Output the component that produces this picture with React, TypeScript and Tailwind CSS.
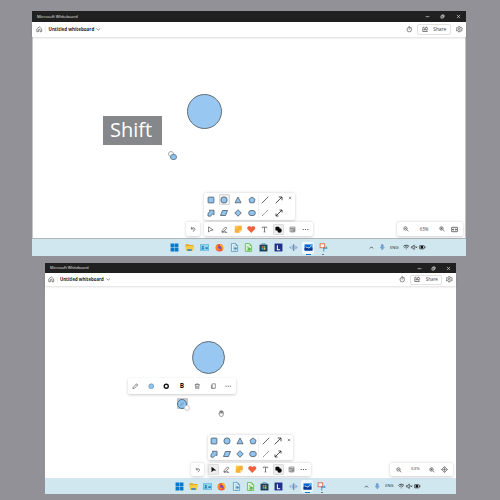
import React from "react";

type IconProps = { name: string; className?: string };

const line = { fill: "none", stroke: "currentColor", strokeWidth: 1.5 };
const shape = { fill: "#8fc5f2", stroke: "#56626e", strokeWidth: 1.7 };

const glyphs: Record<string, React.ReactNode> = {
  home: <path {...line} d="M2 7.5 8 2l6 5.5V14h-4v-4a2 2 0 0 0-4 0v4H2z" />,
  chevronDown: <path {...line} strokeWidth={2} d="m1 5 7 6 7-6" />,
  chevronUp: <path {...line} strokeWidth={2.2} d="m3 11 5-5 5 5" />,
  timer: <path {...line} d="M6 1.5h4M8 5.5V9M8 3.5a5.5 5.5 0 1 0 0 11 5.5 5.5 0 0 0 0-11M12 3l2 2" />,
  share: <path {...line} strokeWidth={1.7} d="M6 3H3a1 1 0 0 0-1 1v9.5h11V11M5 10c0-3 2-5 5-5V2l5 4.5-5 4V8C8 8 6.5 8.5 5 10z" />,
  gear: (
    <g {...line}>
      <path strokeWidth="1.7" d="m6.500 1.500h3l.7 2 2 1 2-.4 1 2.400-1.200 1.500 1.200 1.600-1 2.400-2-.4-2 1-.7 2h-3l-.7-2-2-1-2 .4-1-2.400L2 8 .800 6.500l1-2.400 2 .4 2-1z" />
      <circle cx="8" cy="8" r="2.3" />
    </g>
  ),
  minimize: <path {...line} strokeWidth={2} d="M2 8.5h12" />,
  restore: <path {...line} strokeWidth={2.2} d="M3 6h7v7H3zM6 5.500V3h7v7h-2.500" />,
  close: <path {...line} strokeWidth={2} d="m3 3 10 10M13 3 3 13" />,
  undo: <path {...line} strokeWidth={1.8} d="M3.5 2.5v5h5M4 7c2-2.500 5-3.500 7-1.500 3 3 0 6-4 8" />,
  pointer: <path {...line} strokeWidth={1.6} d="M3.5 2v12l3.500-3.500L14 9z" />,
  pointerFill: <path fill="#0c0c0c" d="M3.5 1.5v13l4-4 7-.5z" />,
  pen: <path {...line} strokeWidth={1.7} d="m3 10 7.500-8 3 3L6 12.500l-4 1zM2 14.500c4 0 7-1 9-2M9 14.500h5" />,
  pencil: <path {...line} strokeWidth={1.6} d="m2 14 1-4 8.500-8 2.500 2.500L6 13zM10 3.500l2.500 2.500" />,
  note: (
    <g>
      <path fill="#fbc641" d="M3 1.500h10A1.500 1.500 0 0 1 14.500 3v7L10 14.500H3A1.500 1.500 0 0 1 1.500 13V3A1.500 1.500 0 0 1 3 1.500z" />
      <path fill="#fa8c24" d="M1.500 14.500 1.500 7c5 1 7-2 7-5.500h6V10L10 14.500z" opacity=".38" />
      <path fill="#ffe8a0" d="M10 14.500V10h4.500z" />
    </g>
  ),
  heart: <path fill="#f2603d" stroke="#d64a2e" strokeWidth=".6" d="M8 14.500 1.500 8C-1 4 4 .5 8 4c4-3.500 9 0 6.500 4z" />,
  letter: <path {...line} strokeWidth={1.7} d="M3 5V2.500h10V5M8 2.500v11M6 13.500h4" />,
  shapes: (
    <g fill="#060606">
      <rect x="1" y="1.500" width="9" height="9" rx="2" />
      <circle cx="10.300" cy="10.300" r="5" />
    </g>
  ),
  template: <path {...line} d="M3.500 2.500h9a1 1 0 0 1 1 1v9a1 1 0 0 1-1 1h-9a1 1 0 0 1-1-1v-9a1 1 0 0 1 1-1zM3 6h10M6.500 6v7.500M9 8.500h3v3H9z" />,
  more: <path fill="currentColor" d="M1.5 7H4v2H1.500zM6.700 7h2.500v2H6.700zM12 7h2.500v2H12z" />,
  square: <rect {...shape} x="2.2" y="2.2" width="11.6" height="11.6" rx="1" />,
  circle: <circle {...shape} cx="8" cy="8" r="6.2" />,
  triangle: <path {...shape} d="M8 2 14 13.500H2z" />,
  pentagon: <path {...shape} d="m8 2 6 4.500-2 7H4l-2-7z" />,
  arrowShape: <path {...shape} d="M4.500 2.500H14V11l-2.500-1L6.500 14.500 2 14V8.500L6 5z" />,
  parallelogram: <path {...shape} d="M5 3h10l-4 10H1z" />,
  diamond: <path {...shape} d="m8 1.500 6.500 6.500L8 14.500 1.500 8z" />,
  ellipse: <rect {...shape} x="1.500" y="3" width="13" height="10" rx="4.500" />,
  diagonal: <path {...line} stroke="#363636" d="M1.500 14.500 14.500 1.500" />,
  dashed: <path {...line} stroke="#444" strokeDasharray="2.400 1" d="M2.500 13.500 13.500 2.500" />,
  arrow: <path {...line} stroke="#333" strokeWidth={1.700} d="M1.500 14.500 14 2M7.500 2H14v6.500" />,
  doubleArrow: <path {...line} stroke="#333" strokeWidth={1.700} d="M2 14 14 2M9 2h5v5M2 9v5h5" />,
  zoomOut: <path {...line} strokeWidth={1.7} d="M6.5 2a4.500 4.500 0 1 0 0 9 4.500 4.500 0 0 0 0-9M4 6.500h5M10 10l4.500 4" />,
  zoomIn: <path {...line} strokeWidth={1.7} d="M6.5 2a4.500 4.500 0 1 0 0 9 4.500 4.500 0 0 0 0-9M4 6.500h5M6.500 4v5M10 10l4.500 4" />,
  fit: <path {...line} strokeWidth={1.7} d="M1.5 3h13v10h-13zM3.500 8H7M9 8h3.500M5.500 6l-2 2 2 2M10.500 6l2 2-2 2" />,
  move: <path {...line} strokeWidth={1.4} d="M8 5.5v5M5.500 8h5M5.500 4 8 1l2.500 3zM5.500 12 8 15l2.500-3zM4 5.500 1 8l3 2.500zM12 5.500 15 8l-3 2.500z" />,
  fillDot: <circle cx="8" cy="8" r="6" fill="#8fc4ee" stroke="#598caf" strokeWidth="1.6" />,
  ring: <circle cx="8" cy="8" r="5" fill="none" stroke="#111" strokeWidth="3.3" />,
  trash: <path {...line} d="M2 4h12M6 4V2h4v2M3.500 4l1 10.500h7l1-10.500M6.500 7v5M9.500 7v5" />,
  copy: <path {...line} d="M5.500 2H13v11H5.500zM3.500 4.500v8c0 1.500 1 2.500 2.500 2.500h4" />,
  hand: <path {...line} fill="#fff" strokeWidth={1.3} d="M3 10 2 7.500c0-1 1.500-1 2 0V4c0-1.500 2-1.500 2 0V2.500c0-1.500 2-1.500 2 0V3c0-1.500 2-1.300 2 0v1c0-1 2-1 2 0v6c0 3-2 5-4 5-3 0-4-2-5-5zM6 4v4M8 3v5M10 4v4" />,
  mic: (
    <g>
      <rect x="5.500" y="1" width="5" height="9" rx="2.500" fill="#75a9dc" stroke="#3c75b5" />
      <path {...line} stroke="#3c75b5" d="M3.500 7.500c0 6 9 6 9 0M8 12v3" />
    </g>
  ),
  wifi: <path {...line} strokeWidth={2} d="M1 6c4-4 10-4 14 0M3.500 9c3-2.500 6-2.500 9 0M8 11v2" />,
  mute: <path {...line} strokeWidth={1.6} d="M1.5 6H4l4-3.500v11L4 10H1.500zM11 6l4 4M15 6l-4 4" />,
  battery: (
    <g>
      <rect x="1" y="4" width="12" height="8" rx="1.5" {...line} strokeWidth="1.6" />
      <path fill="#111" d="M4 5h6v6H4zM14 6h1.500v4H14z" />
    </g>
  ),
  start: <path fill="#0879c8" d="M1 1h6.600v6.600H1zM8.400 1H15v6.600H8.400zM1 8.400h6.600V15H1zM8.400 8.400H15V15H8.400z" />,
  folder: (
    <g>
      <path fill="#e3a11c" d="M1 2h5.500L8 3.500h7v5H1z" />
      <path fill="#f9cc48" d="M1 5h14v9H1z" />
      <path fill="#3183cb" d="M4 11h8v3H4z" />
    </g>
  ),
  card: (
    <g>
      <path fill="#4ba6d4" d="M0 2.500h16v11H0z" />
      <path fill="#8ad8f2" d="M1 3.500h14v9H1z" />
      <circle cx="5" cy="6.500" r="1.800" fill="#3470a0" />
      <path fill="#2d83b7" d="M2.500 11.500c0-4 5-4 5 0zM9.500 7.500H14v3H9.500z" />
    </g>
  ),
  firefox: (
    <g>
      <circle cx="8" cy="8.500" r="6.800" fill="#fa503a" />
      <path fill="#ffb52b" d="M9 1c6 3 7 8 4 12 0-4-1-6-4-8z" />
      <circle cx="8" cy="8.500" r="3.300" fill="#754bb5" />
      <path fill="#ff8a29" d="M1 7 3 3l3 3-2 3c2 2 5 1 6 1-2 5-9 3-9-3z" />
    </g>
  ),
  writer: (
    <g>
      <path fill="#f2faff" stroke="#5799be" strokeWidth="1.500" d="M2.500 1H10l3.500 4v10h-11z" />
      <path stroke="#5393b9" d="M5 5h3M5 7.500h6M5 10h6M5 12.500h6" />
      <path fill="#3987b0" d="M8 8h4v3.500H8zM10 1v4h3.500z" />
    </g>
  ),
  calc: (
    <g>
      <path fill="#e6f7de" stroke="#63b74e" strokeWidth="1.500" d="M2.500 1H10l3.500 4v10h-11z" />
      <path stroke="#59ac44" d="M5 6h3M5 8.500h6M5 11h6M5 13h6M8 8v5" />
      <path fill="#59b844" d="M8 9h4v4H8zM10 1v4h3.500z" />
    </g>
  ),
  store: (
    <g>
      <path fill="#153d5a" d="M1 3h14v12H1z" />
      <path fill="none" stroke="#387497" strokeWidth="1.300" d="M5 4V1.500h6V4" />
      <path fill="#e06b46" d="M4.500 5.500h3.200v3H4.500z" />
      <path fill="#82bf54" d="M8.300 5.500h3.200v3H8.300z" />
      <path fill="#39a8df" d="M4.500 9h3.200v3H4.500z" />
      <path fill="#e8c64c" d="M8.300 9h3.200v3H8.300z" />
    </g>
  ),
  lapp: (
    <g>
      <path fill="#20318b" d="M1 1h14v14H1z" />
      <path fill="none" stroke="#fff" strokeWidth="1.800" d="M6 4v8h5" />
    </g>
  ),
  wave: (
    <g>
      <path fill="#8fb4d8" d="m0 8 4-3v6zM16 8l-4-3v6z" />
      <path fill="#8abce6" d="M5 4.500h2.200v7H5z" />
      <path fill="#5376b0" d="M7.500 2h1.800v12H7.500z" />
      <path fill="#d4949f" d="M9.800 5h2v6h-2z" />
    </g>
  ),
  whiteboard: (
    <g>
      <path fill="#0862cb" d="M1 2.500h14v11H1z" />
      <path fill="#0a348f" d="M1 9c5-5 8 4 14-1v5.500H1z" />
      <path fill="none" stroke="#fff" strokeWidth="1.400" d="m3 7 3 1 3 1 5-5" />
      <path fill="#42bafa" d="m11 5 3-4 2 1-4 5z" />
    </g>
  ),
  snip: (
    <g>
      <path fill="#f7f4f2" stroke="#e07a5d" strokeWidth="1.800" d="M2 1.500h8v7H2z" />
      <path fill="none" stroke="#4a95bc" strokeWidth="1.800" d="M8.500 7v8M7 9.500h8M12 6.500l2.500 3" />
    </g>
  ),
};

function Icon({ name, className = "size-[7px]" }: IconProps) {
  return (
    <svg viewBox="0 0 16 16" className={`shrink-0 ${className}`} aria-hidden="true">
      {glyphs[name]}
    </svg>
  );
}

function TitleBar({ className, controls }: { className: string; controls: string }) {
  return (
    <div className={`flex items-center justify-between bg-[#202020] pl-[5px] text-[#e8e8e8] ${className}`}>
      <span className="whitespace-nowrap">Microsoft Whiteboard</span>
      <div className={`flex items-center justify-between ${controls}`}>
        <Icon name="minimize" className="size-[5px]" />
        <Icon name="restore" className="size-[5px]" />
        <Icon name="close" className="size-[5px]" />
      </div>
    </div>
  );
}

function Header({ className, title, share }: { className: string; title: string; share: string }) {
  return (
    <div className={`relative z-10 flex items-center bg-white text-[#444] shadow-[0_1px_2px_#0002] ${className}`}>
      <Icon name="home" className="size-[6.5px]" />
      <div className="ml-[2.5px] h-[6px] w-px bg-[#eee]" />
      <span className={`whitespace-nowrap font-bold text-[#252525] ${title}`}>Untitled whiteboard</span>
      <Icon name="chevronDown" className="ml-[2px] size-[4.5px]" />
      <Icon name="timer" className="ml-auto size-[6.5px]" />
      <div className={`flex items-center justify-center rounded-[2px] border border-[#e2e2e2] leading-none ${share}`}>
        <Icon name="share" className="size-[6.5px]" />
        <span>Share</span>
      </div>
      <Icon name="gear" className="size-[6.5px]" />
    </div>
  );
}

const shapeNames = [
  "square", "circle", "triangle", "pentagon", "diagonal", "arrow",
  "arrowShape", "parallelogram", "diamond", "ellipse", "dashed", "doubleArrow",
];

function ShapePanel({ className, cell, selected }: { className: string; cell: string; selected?: boolean }) {
  return (
    <div className={`absolute flex rounded-[2px] bg-white shadow-[0_0.5px_3px_#0003] ${className}`}>
      <div className="grid grid-cols-6">
        {shapeNames.map((name) => (
          <div key={name} className={`flex items-center justify-center ${cell}`}>
            <div className={`flex size-[11px] items-center justify-center rounded-[1px] ${selected && name === "circle" ? "border border-[#d8d8d8] bg-[#eee]" : ""}`}>
              <Icon name={name} className="size-[8px]" />
            </div>
          </div>
        ))}
      </div>
      <Icon name="close" className="ml-[2.5px] mt-[3px] size-[4px] text-[#333]" />
      <div className="absolute inset-y-[2px] left-[59.5%] w-px bg-[#f0f0f0]" />
    </div>
  );
}

function ToolBar({ className, cell, selecting }: { className: string; cell: string; selecting?: boolean }) {
  const tools = [selecting ? "pointerFill" : "pointer", "pen", "note", "heart", "letter", "shapes", "template", "more"];
  return (
    <div className={`absolute flex rounded-[2px] bg-white text-[#555] shadow-[0_0.5px_3px_#0003] ${className}`}>
      {tools.map((name) => (
        <div key={name} className={`flex items-center justify-center ${cell}`}>
          <div className={`flex size-[11px] items-center justify-center rounded-[1px] ${name === "shapes" || name === "pointerFill" ? "border border-[#ddd] bg-[#eee]" : ""}`}>
            <Icon name={name} className={name === "heart" || name === "note" ? "size-[8.5px]" : "size-[7px]"} />
          </div>
        </div>
      ))}
    </div>
  );
}

function ZoomBar({ className, last }: { className: string; last: string }) {
  return (
    <div className={`absolute flex items-center rounded-[2px] bg-white text-[#444] shadow-[0_0.5px_3px_#0003] ${className}`}>
      <Icon name="zoomOut" className="size-[6px]" />
      <span className="flex-1 text-center">63%</span>
      <Icon name="zoomIn" className="size-[6px]" />
      <Icon name={last} className="ml-[6px] size-[7px]" />
    </div>
  );
}

const apps = ["start", "folder", "card", "firefox", "writer", "calc", "store", "lapp", "wave", "whiteboard", "snip"];

function TaskBar({ className, cell, tray }: { className: string; cell: string; tray: string }) {
  return (
    <div className={`flex items-center bg-[#d0e7ef] text-[#222] ${className}`}>
      {apps.map((name) => (
        <div key={name} className={`relative flex items-center justify-center ${cell}`}>
          <div className={`flex size-[12px] items-center justify-center rounded-[2px] ${name === "whiteboard" ? "bg-[#eff8fc]" : ""}`}>
            <Icon name={name} className="size-[9px]" />
          </div>
          {name === "whiteboard" && <div className="absolute bottom-[-1px] h-[1px] w-[5px] bg-[#1678c9]" />}
          {name === "snip" && <div className="absolute bottom-[-1px] h-[1px] w-[2px] bg-[#6c7d85]" />}
        </div>
      ))}
      <div className={`flex items-center ${tray}`}>
        <Icon name="chevronUp" className="size-[5px]" />
        <Icon name="mic" className="ml-[5px] size-[6.5px]" />
        <span className="w-[18px] text-center">ENG</span>
        <Icon name="wifi" className="size-[6.5px]" />
        <Icon name="mute" className="ml-[1.500px] size-[6.5px]" />
        <Icon name="battery" className="ml-[1.500px] size-[6.5px]" />
      </div>
    </div>
  );
}

function SelectionBar() {
  return (
    <div className="absolute left-[83px] top-[92px] flex h-[16px] w-[108px] items-center rounded-[2px] bg-white text-[#555] shadow-[0_1px_3px_#0003]">
      {["pencil", "fillDot", "ring", "bold", "trash", "copy", "more"].map((name) => (
        <div key={name} className="flex w-[15.43px] items-center justify-center">
          {name === "bold" ? <b className="text-[6.5px] leading-none text-[#111]">B</b> : <Icon name={name} className="size-[6.5px]" />}
        </div>
      ))}
    </div>
  );
}

export default function App() {
  return (
    <main className="h-[500px] w-[500px] overflow-hidden bg-[#929197] pt-[11px] font-['Open_Sans','Noto_Sans',sans-serif] antialiased">
      <section className="ml-[32px] flex h-[245px] w-[434px] flex-col">
        <TitleBar className="h-[11px] text-[4px]" controls="mr-[5px] w-[36.5px]" />
        <Header
          className="h-[15px] pl-[4px] pr-[3.5px]"
          title="ml-[2.5px] text-[4.5px]"
          share="ml-[5px] mr-[5px] h-[11px] w-[34px] gap-[5px] text-[4.8px]"
        />
        <div className="relative h-[201px] border-x border-[#c5c5c7] bg-white">
          <div className="absolute left-[154px] top-[57px] size-[35px] rounded-full border border-[#626d76] bg-[#98c8f1]" />
          <div className="absolute left-[70px] top-[79px] flex h-[29px] w-[59px] items-center justify-center bg-[#86878b] pb-[1px] pr-[3px] text-[20px] leading-none text-white">Shift</div>
          <div className="absolute left-[135px] top-[114px] size-[6px] rounded-full border-[0.8px] border-[#aaa]" />
          <div className="absolute left-[137px] top-[116.500px] size-[6.500px] rounded-full border border-[#668199] bg-[#8fc4ee]" />
          <ShapePanel className="left-[171px] top-[156px] h-[27px] w-[90.500px]" cell="h-[13.500px] w-[13.600px]" selected />
          <div className="absolute left-[153px] top-[185px] flex h-[14px] w-[14px] items-center justify-center rounded-[2px] bg-white text-[#555] shadow-[0_0.5px_3px_#0003]"><Icon name="undo" className="size-[6.500px]" /></div>
          <ToolBar className="left-[171px] top-[185px] h-[14px] w-[108.500px]" cell="w-[13.560px]" />
          <ZoomBar className="left-[364px] top-[185px] h-[14px] w-[66px] pl-[6px] pr-[5px] text-[4.400px]" last="fit" />
        </div>
        <TaskBar className="h-[18px] border-t border-[#aeb8bd] pl-[135px]" cell="w-[14.900px]" tray="ml-[38px] text-[4.300px]" />
      </section>
      <section className="ml-[45px] mt-[7px] flex h-[231px] w-[411px] flex-col">
        <TitleBar className="h-[10px] text-[3.800px]" controls="mr-[5px] w-[34.500px]" />
        <Header
          className="h-[13px] pl-[3px] pr-[3.500px]"
          title="ml-[2px] text-[4.300px]"
          share="ml-[5px] mr-[4px] h-[10px] w-[32px] gap-[5px] text-[4.500px]"
        />
        <div className="relative h-[192px] bg-white">
          <div className="absolute left-[146.500px] top-[55px] size-[33px] rounded-full border border-[#626d76] bg-[#98c8f1]" />
          <SelectionBar />
          <div className="absolute left-[131.500px] top-[112px] flex size-[11px] items-center justify-center bg-[#c5c7ca]">
            <div className="flex size-[10px] items-center justify-center rounded-full border border-[#4d7595] bg-[#8fc4ee] text-[#58798f]"><Icon name="pencil" className="size-[4px]" /></div>
            <div className="absolute -bottom-[2px] -right-[2px] size-[6px] rounded-full border border-[#ccc] bg-white" />
          </div>
          <div className="absolute left-[172.500px] top-[123.500px] flex text-[#444]"><Icon name="hand" /></div>
          <ShapePanel className="left-[162.500px] top-[148.500px] h-[25.500px] w-[85.500px]" cell="h-[12.750px] w-[12.900px]" />
          <div className="absolute left-[146px] top-[177px] flex h-[13px] w-[13px] items-center justify-center rounded-[2px] bg-white text-[#555] shadow-[0_0.5px_3px_#0003]"><Icon name="undo" className="size-[6px]" /></div>
          <ToolBar className="left-[162.500px] top-[177px] h-[13px] w-[103px]" cell="w-[12.870px]" selecting />
          <ZoomBar className="left-[345px] top-[177px] h-[13px] w-[63px] pl-[6px] pr-[5px] text-[4.200px]" last="move" />
        </div>
        <TaskBar className="h-[16px] pl-[127px]" cell="w-[14.250px]" tray="ml-[35px] text-[4px]" />
      </section>
    </main>
  );
}
